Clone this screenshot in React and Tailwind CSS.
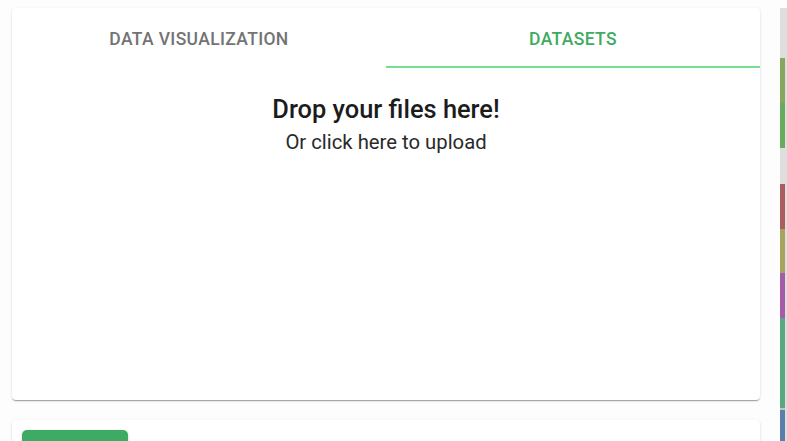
import React, { useState } from 'react';

const segments = [
  { h: 50, color: 'bg-[#dedede]' },
  { h: 45, color: 'bg-[#87a85c]' },
  { h: 45, color: 'bg-[#68ab5f]' },
  { h: 36, color: 'bg-[#dedede]' },
  { h: 45, color: 'bg-[#a95d5f]' },
  { h: 44, color: 'bg-[#a6a55e]' },
  { h: 45, color: 'bg-[#a65ba8]' },
  { h: 90, color: 'bg-[#5aa882]' },
  { h: 2, color: 'bg-[#c4c4c4]' },
  { h: 40, color: 'bg-[#5a7fa8]' },
];

function Timeline() {
  return (
    <div className="mt-[8px] w-[7px] shrink-0 bg-[#dedede] flex flex-col">
      {segments.map((s, i) => (
        <div key={i} className={`w-[5px] shrink-0 ${s.color}`} style={{ height: s.h }} />
      ))}
    </div>
  );
}

export default function App() {
  const [tab, setTab] = useState(1);
  const tabs = ['Data Visualization', 'Datasets'];

  return (
    <div className="h-screen bg-[#fdfdfd] flex gap-[20px] pl-[12px] overflow-hidden font-['Roboto',sans-serif]">
      <div className="w-[748px] shrink-0 flex flex-col gap-[20px] pt-[8px]">
        {/* Main card */}
        <div className="h-[392px] shrink-0 bg-white rounded-[4px] shadow-[0_2px_1px_-1px_rgba(0,0,0,0.2),0_1px_1px_0_rgba(0,0,0,0.14),0_1px_3px_0_rgba(0,0,0,0.12)] flex flex-col">
          <div className="flex h-[60px]">
            {tabs.map((t, i) => (
              <button
                key={t}
                onClick={() => setTab(i)}
                className={`flex-1 flex items-center justify-center pt-[4px] uppercase text-[17.5px] font-medium tracking-[0.02em] border-b-2 ${
                  tab === i ? 'text-[#3faa62] border-[#77dd8f]' : 'text-[#737373] border-transparent'
                }`}
              >
                {t}
              </button>
            ))}
          </div>
          <div className="flex-1 flex flex-col items-center pt-[25px] cursor-pointer">
            <h2 className="text-[25.4px] font-medium text-[#1c1c1c] leading-[32px]">Drop your files here!</h2>
            <p className="text-[20.3px] text-[#2a2a2a] leading-[28px] mt-[3px]">Or click here to upload</p>
          </div>
        </div>

        {/* Second card */}
        <div className="h-[80px] shrink-0 bg-white rounded-[4px] shadow-[0_2px_1px_-1px_rgba(0,0,0,0.2),0_1px_1px_0_rgba(0,0,0,0.14),0_1px_3px_0_rgba(0,0,0,0.12)] p-[10px]">
          <div className="w-[106px] h-[36px] rounded-[5px] bg-[#3dab63] shadow-[0_1px_3px_rgba(0,0,0,0.2)]" />
        </div>
      </div>
      <Timeline />
    </div>
  );
}
